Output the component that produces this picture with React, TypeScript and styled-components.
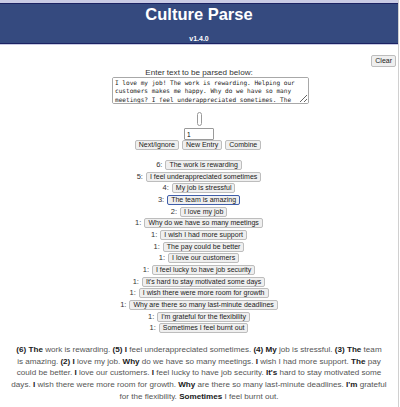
import React from 'react';
import styled, { createGlobalStyle } from 'styled-components';

const Global = createGlobalStyle`
  html, body { margin: 0; padding: 0; background: #fff; }
  body { font-family: "Liberation Sans", Arial, sans-serif; color: #222; }
`;

const Page = styled.div`
  width: 399px;
  min-height: 407px;
  box-sizing: border-box;
  border-right: 1px solid #d0d0d0;
  display: flex;
  flex-direction: column;
  align-items: stretch;
`;

const HeaderFrame = styled.div`
  background: #c9cbe4;
  padding: 3px 0 1px;
`;

const Header = styled.header`
  background: #354a7f;
  border-top: 1px solid #1b2262;
  border-bottom: 1px solid #1b2262;
  color: #fff;
  text-align: center;
  padding-top: 1px;
`;

const Title = styled.h1`
  margin: 0;
  font-size: 16.5px;
  line-height: 19px;
  font-weight: 700;
`;

const Version = styled.div`
  margin-top: 11px;
  font-size: 7px;
  line-height: 8px;
  font-weight: 700;
`;

const Toolbar = styled.div`
  display: flex;
  justify-content: flex-end;
  padding-right: 2px;
  margin-top: 10px;
`;

const Button = styled.button<{ $selected?: boolean }>`
  font-family: "Liberation Sans", Arial, sans-serif;
  font-size: 7px;
  line-height: 8px;
  height: ${p => (p.$tall ? 12 : 10)}px;
  padding: 0 3px;
  margin: 0;
  background: #efefef;
  color: #222;
  border: 1px solid ${p => (p.$selected ? '#3f5eaa' : '#bdbdbd')};
  border-radius: 2px;
  white-space: nowrap;
  cursor: pointer;
` as any;

const Label = styled.div`
  text-align: center;
  font-size: 8.1px;
  line-height: 9px;
  color: #333;
  margin-top: 1px;
`;

const TextArea = styled.textarea`
  display: block;
  align-self: center;
  margin-left: 23px;
  width: 197px;
  height: 27px;
  box-sizing: border-box;
  padding: 1px 2px;
  font-family: "DejaVu Sans Mono", "Liberation Mono", monospace;
  font-size: 6.1px;
  line-height: 8.3px;
  color: #222;
  border: 1px solid #a8a8a8;
  border-radius: 2px;
  resize: both;
  overflow-y: scroll;
  &::-webkit-scrollbar { width: 4px; }
  &::-webkit-scrollbar-thumb { background: #c4c4c4; border-radius: 2px; }
  &::-webkit-scrollbar-track { background: transparent; }
`;

const Handle = styled.div`
  align-self: center;
  margin-top: 8px;
  width: 3px;
  height: 12px;
  border: 1px solid #9a9a9a;
  border-radius: 3px;
  background: #fff;
`;

const CountInput = styled.input`
  align-self: center;
  margin-top: 2px;
  width: 30px;
  height: 12px;
  box-sizing: border-box;
  padding: 0 2px;
  font-family: "Liberation Sans", Arial, sans-serif;
  font-size: 6.5px;
  border: 1px solid #9a9a9a;
  border-radius: 1px;
`;

const Actions = styled.div`
  display: flex;
  justify-content: center;
  gap: 3px;
  margin-left: -2px;
`;

const List = styled.div`
  display: flex;
  flex-direction: column;
  align-items: center;
  gap: 1.67px;
  margin-top: 10px;
`;

const Row = styled.div`
  display: flex;
  align-items: center;
  justify-content: center;
  gap: 3px;
  height: 10px;
`;

const Count = styled.span`
  font-size: 7.5px;
  line-height: 10px;
  color: #333;
`;

const Summary = styled.p`
  margin: 11px 0 0;
  padding: 0 1px;
  text-align: center;
  font-size: 8.1px;
  line-height: 11.6px;
  color: #555;
  white-space: nowrap;
`;

const Strong = styled.b`
  font-weight: 700;
  color: #1a1a1a;
`;

const entries: { n: number; text: string; selected?: boolean }[] = [
  { n: 6, text: 'The work is rewarding' },
  { n: 5, text: 'I feel underappreciated sometimes' },
  { n: 4, text: 'My job is stressful' },
  { n: 3, text: 'The team is amazing', selected: true },
  { n: 2, text: 'I love my job' },
  { n: 1, text: 'Why do we have so many meetings' },
  { n: 1, text: 'I wish I had more support' },
  { n: 1, text: 'The pay could be better' },
  { n: 1, text: 'I love our customers' },
  { n: 1, text: 'I feel lucky to have job security' },
  { n: 1, text: "It's hard to stay motivated some days" },
  { n: 1, text: 'I wish there were more room for growth' },
  { n: 1, text: 'Why are there so many last-minute deadlines' },
  { n: 1, text: "I'm grateful for the flexibility" },
  { n: 1, text: 'Sometimes I feel burnt out' },
];

type Seg = [boolean, string];
const lines: Seg[][] = [
  [[true, '(6) The'], [false, ' work is rewarding. '], [true, '(5) I'], [false, ' feel underappreciated sometimes. '], [true, '(4) My'], [false, ' job is stressful. '], [true, '(3) The'], [false, ' team']],
  [[false, 'is amazing. '], [true, '(2) I'], [false, ' love my job. '], [true, 'Why'], [false, ' do we have so many meetings. '], [true, 'I'], [false, ' wish I had more support. '], [true, 'The'], [false, ' pay']],
  [[false, 'could be better. '], [true, 'I'], [false, ' love our customers. '], [true, 'I'], [false, ' feel lucky to have job security. '], [true, "It's"], [false, ' hard to stay motivated some']],
  [[false, 'days. '], [true, 'I'], [false, ' wish there were more room for growth. '], [true, 'Why'], [false, ' are there so many last-minute deadlines. '], [true, "I'm"], [false, ' grateful']],
  [[false, 'for the flexibility. '], [true, 'Sometimes'], [false, ' I feel burnt out.']],
];

const inputText =
  "I love my job! The work is rewarding. Helping our customers makes me happy. Why do we have so many meetings? I feel underappreciated sometimes. The team is amazing. My job is stressful. I wish I had more support. The pay could be better. I love our customers.";

export default function App() {
  return (
    <>
      <Global />
      <Page>
        <HeaderFrame>
          <Header>
            <Title>Culture Parse</Title>
            <Version>v1.4.0</Version>
          </Header>
        </HeaderFrame>
        <Toolbar>
          <Button $tall>Clear</Button>
        </Toolbar>
        <Label>Enter text to be parsed below:</Label>
        <TextArea defaultValue={inputText} spellCheck={false} />
        <Handle />
        <CountInput defaultValue="1" />
        <Actions>
          <Button>Next/Ignore</Button>
          <Button>New Entry</Button>
          <Button>Combine</Button>
        </Actions>
        <List>
          {entries.map((e, i) => (
            <Row key={i}>
              <Count>{e.n}:</Count>
              <Button $selected={e.selected}>{e.text}</Button>
            </Row>
          ))}
        </List>
        <Summary>
          {lines.map((line, i) => (
            <React.Fragment key={i}>
              {line.map(([b, t], j) => (b ? <Strong key={j}>{t}</Strong> : <React.Fragment key={j}>{t}</React.Fragment>))}
              {i < lines.length - 1 && <br />}
            </React.Fragment>
          ))}
        </Summary>
      </Page>
    </>
  );
}
